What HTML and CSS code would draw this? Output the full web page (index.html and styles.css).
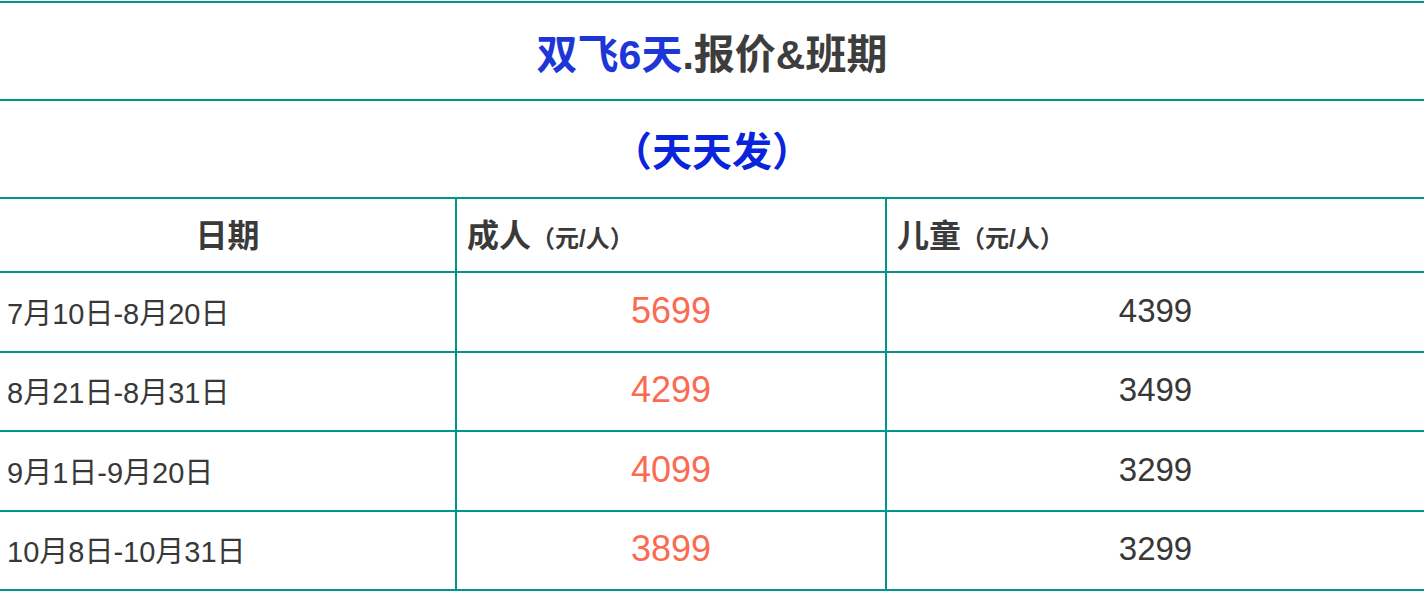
FILE: index.html
```html
<!DOCTYPE html>
<html lang="zh-CN">
<head>
<meta charset="utf-8">
<title>双飞6天.报价&amp;班期</title>
<link rel="stylesheet" href="styles.css">
</head>
<body>
<table class="price-table">
  <colgroup>
    <col class="col-date">
    <col class="col-adult">
    <col class="col-child">
  </colgroup>
  <tbody>
    <tr class="row-title">
      <td colspan="3" class="title"><span class="blue">双飞6天</span>.报价&amp;班期</td>
    </tr>
    <tr class="row-title">
      <td colspan="3" class="subtitle">（天天发）</td>
    </tr>
    <tr class="row-head">
      <th class="head-center">日期</th>
      <th class="head-left">成人<span class="unit">（元/人）</span></th>
      <th class="head-left last">儿童<span class="unit">（元/人）</span></th>
    </tr>
    <tr class="row-data">
      <td class="date">7月10日-8月20日</td>
      <td class="adult">5699</td>
      <td class="child last">4399</td>
    </tr>
    <tr class="row-data">
      <td class="date">8月21日-8月31日</td>
      <td class="adult">4299</td>
      <td class="child last">3499</td>
    </tr>
    <tr class="row-data">
      <td class="date">9月1日-9月20日</td>
      <td class="adult">4099</td>
      <td class="child last">3299</td>
    </tr>
    <tr class="row-data">
      <td class="date">10月8日-10月31日</td>
      <td class="adult">3899</td>
      <td class="child last">3299</td>
    </tr>
  </tbody>
</table>
</body>
</html>
```
FILE: styles.css
```css
html, body {
  margin: 0;
  padding: 0;
  background: #ffffff;
}

body {
  padding-top: 1px;
  font-family: "Liberation Sans", "Noto Sans CJK SC", sans-serif;
  color: #333333;
}

.price-table {
  width: 1424px;
  border-collapse: separate;
  border-spacing: 0;
  table-layout: fixed;
  border-top: 2px solid #00968a;
}

.col-date { width: 457px; }
.col-adult { width: 430px; }
.col-child { width: 537px; }

.price-table td,
.price-table th {
  border-bottom: 2px solid #00968a;
  border-right: 2px solid #00968a;
  padding: 0;
  vertical-align: middle;
}

.price-table .last,
.price-table .title,
.price-table .subtitle {
  border-right: none;
}

.row-title td {
  height: 96px;
  text-align: center;
  font-weight: bold;
}

.title {
  font-size: 41px;
  color: #3d3d3d;
}

.blue {
  color: #1c36d8;
}

.subtitle {
  font-size: 40px;
  color: #0a24dc;
}

.row-head th {
  height: 68px;
  font-size: 32px;
  font-weight: bold;
  color: #3a3a3a;
  padding-bottom: 4px;
}

.head-center {
  text-align: center;
}

.head-left {
  text-align: left;
  padding-left: 10px !important;
}

.unit {
  font-size: 24px;
}

.row-data td {
  height: 75.5px;
  padding-bottom: 2px;
}

.date {
  font-size: 29px;
  color: #383838;
  padding-left: 7px !important;
  text-align: left;
}

.adult {
  font-size: 36px;
  color: #fa6b52;
  text-align: center;
}

.child {
  font-size: 33px;
  color: #383838;
  text-align: center;
}
```
